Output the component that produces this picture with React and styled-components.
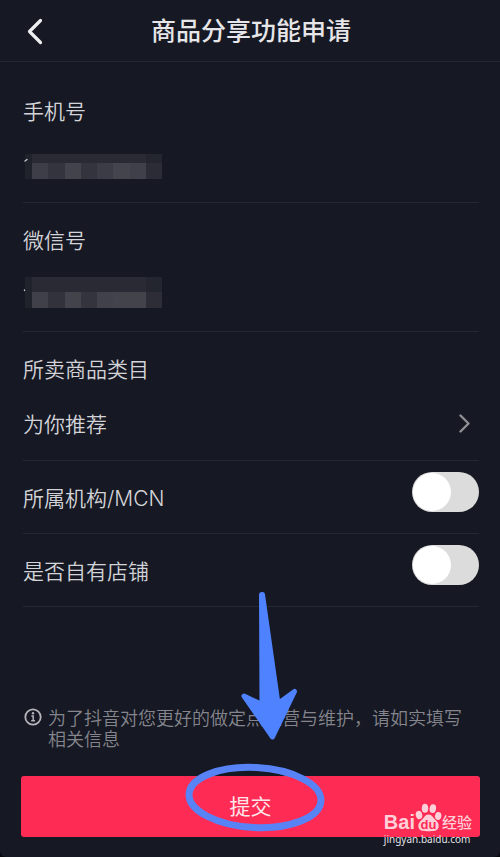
import React, { useState } from "react";
import styled, { createGlobalStyle } from "styled-components";

const GlobalStyle = createGlobalStyle`
  *, *::before, *::after { box-sizing: border-box; }
  body {
    margin: 0;
    background: #07080c;
    font-family: "Noto Sans CJK SC", "Noto Sans", sans-serif;
    color: #d3d4d8;
  }
`;

const Page = styled.main`
  display: flex;
  flex-direction: column;
  min-height: 100vh;
  background: #161823;
  border-radius: 0 0 6px 6px;
  overflow: hidden;
`;

const Header = styled.header`
  display: grid;
  grid-template-columns: 72px 1fr 70px;
  align-items: center;
  height: 62px;
  border-bottom: 1px solid #252731;
`;

const BackButton = styled.button`
  display: flex;
  align-items: center;
  width: 72px;
  height: 48px;
  padding: 0 0 0 26px;
  border: 0;
  background: none;
  color: #eeeef0;
  cursor: pointer;
`;

const Title = styled.h1`
  margin: 0;
  padding-bottom: 4px;
  font-size: 25px;
  line-height: 36px;
  font-weight: 500;
  text-align: center;
  color: #e6e6e9;
`;

const Form = styled.form`
  display: flex;
  flex-direction: column;
  flex: 1;
  padding: 12px 21px 20px 23px;
`;

const Field = styled.div`
  display: flex;
  flex-direction: column;
  gap: 23px;
  padding: 23px 0 22px;
  border-bottom: 1px solid #252731;
`;

const Label = styled.label`
  font-family: Inter, "Noto Sans CJK SC", sans-serif;
  font-size: 21px;
  line-height: 30px;
  font-weight: 350;
`;

const ValueBox = styled.div`
  position: relative;
  height: 30px;
`;

const TextInput = styled.input`
  width: 100%;
  height: 30px;
  padding: 0;
  border: 0;
  outline: 0;
  background: transparent;
  color: inherit;
  font: inherit;
  font-size: 21px;
`;

const Mosaic = styled.svg`
  position: absolute;
  left: 0;
  bottom: 1px;
  pointer-events: none;
`;

const SelectRow = styled.div`
  display: flex;
  align-items: center;
  justify-content: space-between;
  height: 30px;
  color: #8f9096;
  padding-right: 8px;
`;

const Select = styled.select`
  flex: 1;
  height: 30px;
  padding: 0;
  border: 0;
  outline: 0;
  appearance: none;
  background: transparent;
  color: #d3d4d8;
  font-family: inherit;
  font-size: 21px;
  line-height: 30px;
  font-weight: 350;
`;

const SwitchRow = styled.div`
  display: flex;
  justify-content: space-between;
  height: 73px;
  padding: 11px 0 19px;
  border-bottom: 1px solid #252731;

  ${Label} { align-self: flex-end; }
`;

const Switch = styled.input`
  appearance: none;
  display: flex;
  align-items: center;
  width: 67px;
  height: 40px;
  margin: 0;
  padding: 1px;
  border-radius: 20px;
  background: #dcdcdc;
  cursor: pointer;

  &::before {
    content: "";
    width: 38px;
    height: 38px;
    border-radius: 50%;
    background: #fff;
  }

  &:checked { justify-content: flex-end; background: #fe2c55; }
`;

const Footer = styled.footer`
  position: relative;
  display: flex;
  flex-direction: column;
  gap: 27px;
  margin: 100px -1px 0 -2px;
`;

const Note = styled.p`
  display: flex;
  gap: 6px;
  margin: 0;
  padding: 0 12px 0 3px;
  font-size: 18px;
  line-height: 21px;
  font-weight: 350;
  color: #85868d;

  svg { flex: none; margin-top: 1px; color: #b4b5ba; }
`;

const SubmitButton = styled.button`
  height: 61px;
  padding: 0 0 3px;
  border: 0;
  border-radius: 3px;
  background: #fe2c55;
  color: #ffe6eb;
  font-family: inherit;
  font-size: 21px;
  line-height: 30px;
  cursor: pointer;
`;

const Annotation = styled.svg`
  position: absolute;
  left: 50%;
  bottom: 0;
  margin-left: -71px;
  overflow: visible;
  pointer-events: none;
`;

const Watermark = styled.div`
  position: absolute;
  right: 8px;
  bottom: -9px;
  display: flex;
  flex-direction: column;
  color: #ffd0d9;
  pointer-events: none;
`;

const Brand = styled.div`
  display: flex;
  align-items: flex-end;
  height: 29px;

  svg { flex: none; }
`;

const BrandLatin = styled.span`
  font-family: "Liberation Sans", Arial, sans-serif;
  font-size: 20px;
  line-height: 20px;
  font-weight: 700;
`;

const BrandChinese = styled.span`
  font-size: 15px;
  line-height: 20px;
  font-weight: 500;
`;

const SiteName = styled.span`
  font-family: "Noto Sans", sans-serif;
  font-size: 10px;
  line-height: 14px;
  color: #e4e4e8;
`;

const phoneTones = ["#3d3e47", "#33343e", "#42434b", "#33343e", "#3b3c45", "#43444c", "#3f4049", "#2b2c36"];
const wechatTones = ["#3f4049", "#31323c", "#42434b", "#33343e", "#40414a", "#42434b", "#42434b", "#2c2d37"];

function MaskedValue({ tones, topHeight, mark }) {
  const top = 15 - topHeight;
  return (
    <Mosaic width="140" height="31" viewBox="0 0 140 31" aria-hidden="true" shapeRendering="crispEdges">
      <rect x="2" y={top} width="7" height={topHeight + 16} fill="#20222c" />
      <rect x="9" y={top} width="114" height={topHeight} fill="#292a34" />
      <rect x="123" y={top} width="16" height={topHeight} fill="#23252f" />
      {tones.map((tone, i) => (
        <rect key={i} x={9 + i * 16.25} y="15" width="16.25" height="16" fill={tone} />
      ))}
      <path d={mark} stroke="#c4c5ca" strokeWidth="1.4" strokeLinecap="round" shapeRendering="auto" />
    </Mosaic>
  );
}

function MaskedField({ id, label, type, ...mask }) {
  return (
    <Field>
      <Label htmlFor={id}>{label}</Label>
      <ValueBox>
        <TextInput id={id} type={type} />
        <MaskedValue {...mask} />
      </ValueBox>
    </Field>
  );
}

function SwitchField({ id, label }) {
  const [on, setOn] = useState(false);
  return (
    <SwitchRow>
      <Label htmlFor={id}>{label}</Label>
      <Switch id={id} type="checkbox" role="switch" checked={on} onChange={() => setOn(!on)} />
    </SwitchRow>
  );
}

function InfoIcon() {
  return (
    <svg width="18" height="18" viewBox="0 0 18 18" fill="none" aria-hidden="true">
      <circle cx="9" cy="9" r="7.7" stroke="currentColor" strokeWidth="1.8" />
      <circle cx="9" cy="5.3" r="1.2" fill="currentColor" />
      <path d="M7.4 8H9.2V12.6M7.2 12.8H11" stroke="currentColor" strokeWidth="1.5" />
    </svg>
  );
}

function Paw() {
  return (
    <svg width="27" height="29" viewBox="0 0 27 29" aria-hidden="true">
      <g fill="#ffd0d9">
        <ellipse cx="4" cy="12" rx="3.2" ry="4.2" transform="rotate(-14 4 12)" />
        <ellipse cx="10" cy="5.2" rx="3.2" ry="4.5" />
        <ellipse cx="17.8" cy="5.6" rx="3.2" ry="4.4" transform="rotate(10 17.8 5.6)" />
        <ellipse cx="23.2" cy="13" rx="3.2" ry="4" transform="rotate(10 23.2 13)" />
        <path d="M13.5 11.5C17 11.5 18.3 15 20.5 17C23 19.2 24 21 23.6 23.8C23.2 27.4 20 28.4 13.5 28.2C7 28.4 3.8 27.4 3.4 23.8C3 21 4.2 19.2 6.6 17C9 15 10 11.5 13.5 11.5Z" />
      </g>
      <text x="13.5" y="26" textAnchor="middle" fontFamily="Liberation Sans, sans-serif" fontSize="13" fontWeight="700" fill="#fe2c55">du</text>
    </svg>
  );
}

export default function App() {
  return (
    <>
      <GlobalStyle />
      <Page>
        <Header>
          <BackButton type="button" aria-label="返回">
            <svg width="18" height="28" viewBox="0 0 18 28" fill="none" aria-hidden="true">
              <path d="M14.5 3.5L3.5 14.5L14.5 25.5" stroke="currentColor" strokeWidth="3.2" strokeLinecap="round" strokeLinejoin="round" />
            </svg>
          </BackButton>
          <Title>商品分享功能申请</Title>
        </Header>
        <Form onSubmit={(event) => event.preventDefault()}>
          <MaskedField id="phone" label="手机号" type="tel" tones={phoneTones} topHeight={9} mark="M2 13L4 11.5" />
          <MaskedField id="wechat" label="微信号" type="text" tones={wechatTones} topHeight={15} mark="M1.5 13V13.5" />
          <Field>
            <Label htmlFor="category">所卖商品类目</Label>
            <SelectRow>
              <Select id="category">
                <option>为你推荐</option>
              </Select>
              <svg width="13" height="20" viewBox="0 0 13 20" fill="none" aria-hidden="true">
                <path d="M2.5 2.5L10.5 10.5L2.5 18.5" stroke="currentColor" strokeWidth="2.4" strokeLinecap="round" strokeLinejoin="round" />
              </svg>
            </SelectRow>
          </Field>
          <SwitchField id="agency" label="所属机构/MCN" />
          <SwitchField id="shop" label="是否自有店铺" />
          <Footer>
            <Note>
              <InfoIcon />
              <span>为了抖音对您更好的做定点运营与维护，请如实填写相关信息</span>
            </Note>
            <SubmitButton type="submit">提交</SubmitButton>
            <Annotation width="150" height="250" viewBox="180 587 150 250" aria-hidden="true">
              <path
                d="M261.5 594.5L262.5 594.5L278 703.5L294.5 691.5L272.5 737L244 696L262 704.5Z"
                fill="#4f82ff" stroke="#4f82ff" strokeWidth="5" strokeLinejoin="round"
              />
              <ellipse cx="255" cy="797.5" rx="66" ry="30" transform="rotate(3 255 797.5)" fill="none" stroke="#5783f7" strokeWidth="7" />
            </Annotation>
            <Watermark>
              <Brand>
                <BrandLatin>Bai</BrandLatin>
                <Paw />
                <BrandChinese>经验</BrandChinese>
              </Brand>
              <SiteName>jingyan.baidu.com</SiteName>
            </Watermark>
          </Footer>
        </Form>
      </Page>
    </>
  );
}
